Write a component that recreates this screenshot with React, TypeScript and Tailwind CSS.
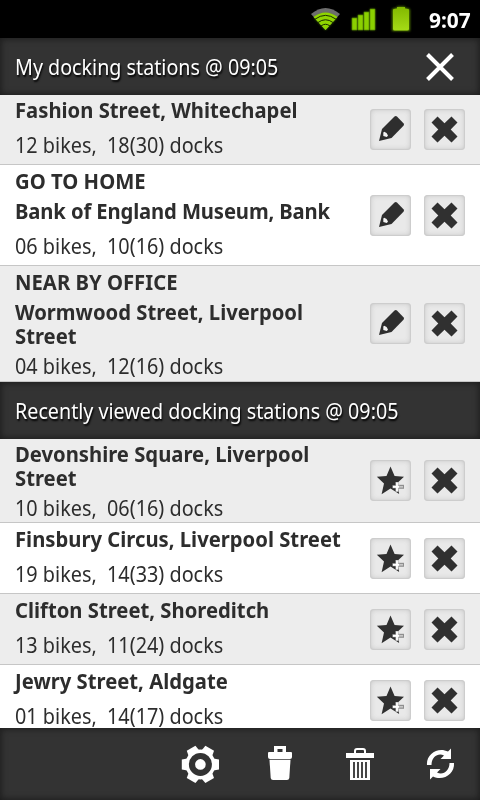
import clsx from "clsx";

interface Station {
  label?: string;
  name: string[];
  bikes: string;
  docks: string;
  height: string;
  padding: string;
  tracking?: string;
}

const saved: Station[] = [
  { name: ["Fashion Street, Whitechapel"], bikes: "12", docks: "18(30)", height: "h-[70px]", padding: "pt-[2px]" },
  {
    label: "GO TO HOME",
    name: ["Bank of England Museum, Bank"],
    bikes: "06",
    docks: "10(16)",
    height: "h-[101px]",
    padding: "pt-[3px]",
    tracking: "tracking-[-0.14px]",
  },
  {
    label: "NEAR BY OFFICE",
    name: ["Wormwood Street, Liverpool", "Street"],
    bikes: "04",
    docks: "12(16)",
    height: "h-[116px]",
    padding: "pt-[3px]",
  },
];

const recent: Station[] = [
  { name: ["Devonshire Square, Liverpool", "Street"], bikes: "10", docks: "06(16)", height: "h-[84px]", padding: "pt-[2px]" },
  { name: ["Finsbury Circus, Liverpool Street"], bikes: "19", docks: "14(33)", height: "h-[71px]", padding: "pt-[3px]" },
  { name: ["Clifton Street, Shoreditch"], bikes: "13", docks: "11(24)", height: "h-[71px]", padding: "pt-[3px]" },
  { name: ["Jewry Street, Aldgate"], bikes: "01", docks: "14(17)", height: "h-[71px]", padding: "pt-[3px]" },
];

function PencilIcon() {
  return (
    <svg width="41" height="41" viewBox="0 0 41 41">
      <path d="M9 32 L12 20 L24.5 7.5 Q26 6.6 27.2 7.8 L33.7 14.5 Q34.4 15.5 33.5 16.8 L21.5 29 Z" fill="#2e2e2e" />
      <path d="M13.3 23.5 L13.3 27 L16.8 28 L18 26.5 Q17 23.5 14.3 22.7 Z" fill="#f4f4f4" />
    </svg>
  );
}

function CrossIcon() {
  return (
    <svg width="41" height="41" viewBox="0 0 41 41">
      <path
        d="M13.5 7.5 L20.5 14.3 L27.5 7.5 L33.5 13.5 L26.7 20.5 L33.5 27.5 L27.5 33.5 L20.5 26.7 L13.5 33.5 L7.5 27.5 L14.3 20.5 L7.5 13.5 Z"
        fill="#303030"
      />
    </svg>
  );
}

function StarIcon() {
  return (
    <svg width="41" height="41" viewBox="0 0 41 41">
      <path d="M20.5 6.5 L24.6 16 L34 16.8 L27 23.3 L29.2 34 L20.5 28.5 L11.6 34.2 L14 23.5 L6.8 16.8 L16.5 16 Z" fill="#303030" />
      <path d="M27.5 24.8 H34 V28.8 H27.5 Z" fill="#8f8f8f" />
      <path d="M28.5 26.8 H33" stroke="#c9c9c9" strokeWidth="1.6" />
      <path d="M27 22 V32 M22.5 26.8 H29.5" stroke="#b5b5b5" strokeWidth="3" />
      <path d="M27 22.5 V31 M23 26.8 H29" stroke="#fff" strokeWidth="1.8" />
    </svg>
  );
}

function RowButton({ children }: { children: React.ReactNode }) {
  return (
    <button className="size-[41px] rounded-[4px] bg-[#e9e9e9] shadow-[inset_0_0_5px_1px_#cbcbcb,inset_0_0_1px_1px_#cfcfcf]">
      {children}
    </button>
  );
}

function SectionHeader({ title, closable }: { title: string; closable?: boolean }) {
  return (
    <div className="flex h-[57px] shrink-0 items-center justify-between bg-[#333] pr-[25px] pl-[15px] shadow-[inset_0_0_6px_1px_#1c1c1c]">
      <h2 className="origin-left scale-x-[0.896] text-[22px] whitespace-nowrap text-white [text-shadow:1px_2px_2px_#000]">
        {title}
      </h2>
      {closable && (
        <svg width="30" height="30" viewBox="0 0 30 30">
          <path d="M2.5 2.5 L27.5 27.5 M27.5 2.5 L2.5 27.5" stroke="#fff" strokeWidth="4" />
        </svg>
      )}
    </div>
  );
}

function StationRow({ station, shaded, starred }: { station: Station; shaded: boolean; starred?: boolean }) {
  return (
    <li
      className={clsx(
        "flex shrink-0 items-center justify-between border-b border-[#c6c6c6] pr-[15px] pl-[15px]",
        station.height,
        shaded ? "bg-[#ededed]" : "bg-white"
      )}
    >
      <div
        className={clsx(
          "flex h-full w-[340px] flex-col text-[22px] leading-[24px] whitespace-nowrap text-[#2d2d2d]",
          station.padding
        )}
      >
        {station.label && <p className="mb-[6px] origin-left scale-x-[0.922] font-bold">{station.label}</p>}
        {station.name.map((line) => (
          <p key={line} className={clsx("origin-left scale-x-[0.92] font-bold", station.tracking)}>
            {line}
          </p>
        ))}
        <p className={clsx("origin-left scale-x-[0.901]", station.name.length > 1 ? "mt-[6px]" : "mt-[11px]")}>
          {station.bikes} bikes,&nbsp; {station.docks} docks
        </p>
      </div>
      <div className="flex shrink-0 gap-[13px]">
        <RowButton>{starred ? <StarIcon /> : <PencilIcon />}</RowButton>
        <RowButton>
          <CrossIcon />
        </RowButton>
      </div>
    </li>
  );
}

function StatusBar() {
  return (
    <div className="flex h-[38px] shrink-0 items-center bg-black pr-[10px] pl-[308px]">
      <svg width="112" height="38" viewBox="308 0 112 38" className="shrink-0">
        <defs>
          <linearGradient id="lime" x1="0" y1="0" x2="0" y2="1">
            <stop offset="0" stopColor="#82b800" />
            <stop offset="1" stopColor="#a5dc16" />
          </linearGradient>
          <filter id="glow" x="-30%" y="-30%" width="160%" height="160%">
            <feGaussianBlur stdDeviation="1.3" />
          </filter>
        </defs>
        <path d="M325.5 30 L311 14 Q325.5 2 340 14 Z" fill="#6d6d6d" />
        <path d="M325.5 30 L314.5 18 Q325.5 9 336.5 18 Z" fill="#4c7d00" filter="url(#glow)" />
        <path d="M325.5 30 L313.5 17 Q325.5 8 337.5 17 Z" fill="#8fd400" />
        <path
          d="M315 19.2 Q325.5 11.5 336 19.2 M318 22.5 Q325.5 17 333 22.5 M321 26 Q325.5 22.5 330 26"
          fill="none"
          stroke="#192b00"
          strokeWidth="1"
        />
        <g fill="#568500" filter="url(#glow)">
          <path d="M352 18 H357 V30 H352 Z M358 15 H363 V30 H358 Z M364 12 H369 V30 H364 Z M370 9 H375 V30 H370 Z" />
          <path d="M392 10 Q392 8 397 8 V6.5 H405 V8 Q410 8 410 10 V31 H392 Z" />
        </g>
        <path
          d="M352 18 H357 V30 H352 Z M358 15 H363 V30 H358 Z M364 12 H369 V30 H364 Z M370 9 H375 V30 H370 Z"
          fill="#8bd000"
          stroke="#4b7a00"
          strokeWidth="0.6"
        />
        <path
          d="M393 10 Q393 8.5 397 8.5 V7 H405 V8.5 Q409 8.5 409 10 V29 Q409 30.5 407 30.5 H395 Q393 30.5 393 29 Z"
          fill="url(#lime)"
        />
      </svg>
      <span className="ml-[9px] origin-left scale-x-[0.95] text-[22px] leading-[38px] font-bold text-white">9:07</span>
    </div>
  );
}

function Toolbar() {
  return (
    <footer className="grid h-[72px] shrink-0 grid-cols-6 items-center bg-[#333] shadow-[inset_0_0_6px_1px_#1c1c1c]">
      <button className="col-start-3 flex justify-center">
        <svg width="40" height="40" viewBox="-20.4 -20.4 40 40">
          <g fill="#fff">
            <circle r="15" />
            {[0, 60, 120, 180, 240, 300].map((angle) => (
              <path key={angle} d="M13 -6 L18.6 -5 V5 L13 6 Z" transform={`rotate(${angle})`} />
            ))}
          </g>
          <circle r="8.4" fill="none" stroke="#333" strokeWidth="6.2" />
        </svg>
      </button>
      <button className="flex justify-center">
        <svg width="40" height="40" viewBox="0 0 40 40" fill="#fff">
          <path d="M14 10 V2 H26 V10 H22.5 V5 H17.5 V10 Z" />
          <path d="M8 9 Q8 8 9 8 H31 Q32 8 32 9 V13 Q32 15 30 15 H10 Q8 15 8 13 Z" />
          <path d="M9.5 15.8 H30.5 L29.3 34 Q29 36 27 36 H13 Q11 36 10.7 34 Z" />
        </svg>
      </button>
      <button className="flex justify-center">
        <svg width="40" height="40" viewBox="0 0 40 40" fill="none">
          <path d="M15 9 V7 Q15 5 17 5 H23 Q25 5 25 7 V9" stroke="#fff" strokeWidth="2" />
          <path d="M6 9 H34 V14 H6 Z" fill="#fff" />
          <path d="M10 16 H30 V36 H10 Z" fill="#fff" />
          <path d="M14 18 V34 M18 18 V34 M22 18 V34 M26 18 V34" stroke="#333" strokeWidth="1.8" />
        </svg>
      </button>
      <button className="flex justify-center">
        <svg width="40" height="40" viewBox="0 0 40 40">
          <g id="arrow">
            <path d="M7 21 C6 10 18 2.5 28 7.5 L31 4.5 V15 H20.5 L24 11.5 C18 8.5 11.5 13 11.5 21 Z" fill="#fff" />
          </g>
          <use href="#arrow" transform="rotate(180 20.5 20)" />
        </svg>
      </button>
    </footer>
  );
}

export default function App() {
  return (
    <div className="flex h-[800px] w-[480px] flex-col overflow-hidden bg-white font-['Noto_Sans','Open_Sans',sans-serif]">
      <StatusBar />
      <main className="flex min-h-0 flex-1 flex-col overflow-hidden">
        <SectionHeader title="My docking stations @ 09:05" closable />
        <ul className="shrink-0">
          {saved.map((station, i) => (
            <StationRow key={station.name[0]} station={station} shaded={i % 2 === 0} />
          ))}
        </ul>
        <SectionHeader title="Recently viewed docking stations @ 09:05" />
        <ul className="shrink-0">
          {recent.map((station, i) => (
            <StationRow key={station.name[0]} station={station} shaded={i % 2 === 0} starred />
          ))}
        </ul>
      </main>
      <Toolbar />
    </div>
  );
}
